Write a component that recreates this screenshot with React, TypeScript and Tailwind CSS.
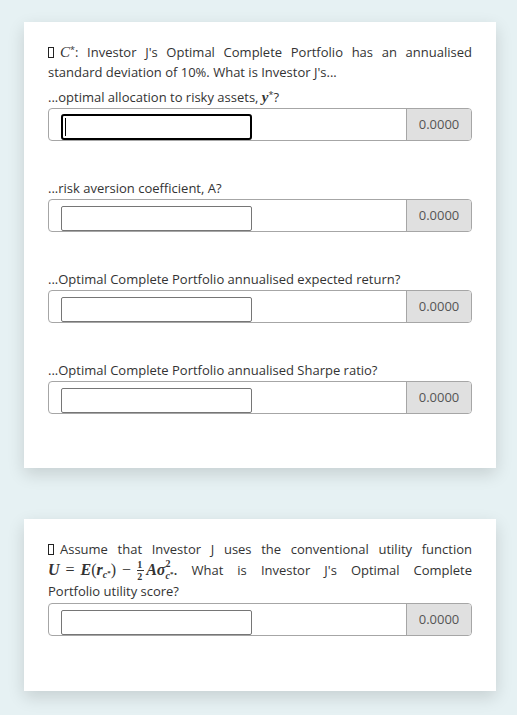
import React from "react";

const font = { fontFamily: '"Open Sans", "Noto Sans", sans-serif' };

function Tofu() {
  return <span className="inline-block w-[6px] h-[11px] border border-[#222] align-[-1px] mr-[6px]" />;
}

function InputGroup({ focused = false }: { focused?: boolean }) {
  return (
    <div className="flex h-[33px] w-[424px] border border-[#a6a6a6] rounded-[4px] overflow-hidden bg-white">
      <div className="flex-1 flex items-end pl-[12px]">
        {focused ? (
          <div className="w-[191px] h-[26px] border-2 border-black rounded-[3px] flex items-center pl-[2px]">
            <div className="w-[1px] h-[18px] bg-black" />
          </div>
        ) : (
          <div className="w-[191px] h-[25px] border border-[#767676] rounded-[2px]" />
        )}
      </div>
      <div className="w-[65px] border-l border-[#a6a6a6] bg-[#e0e0e0] flex items-center justify-center text-[#555] text-[13px]">
        0.0000
      </div>
    </div>
  );
}

function Section({ label, first = false }: { label: React.ReactNode; first?: boolean }) {
  return (
    <div className={first ? "mt-[5px]" : "mt-[37px]"}>
      <div className="leading-[20px] h-[21px]">{label}</div>
      <InputGroup focused={first} />
    </div>
  );
}

const justifyLine = "text-justify [text-align-last:justify]";
const mathI = { fontFamily: '"Liberation Serif", "DejaVu Serif", serif' };

export default function App() {
  return (
    <div className="min-h-[715px] bg-[#e6f1f3] pt-[22px] pb-[23px] text-[#333] text-[13px]" style={font}>
      <div className="ml-[24px] w-[472px] bg-white pt-[20px] px-[24px] pb-[54px] shadow-[0_6px_16px_rgba(0,0,0,0.14)]">
        <div className={"leading-[20px] " + justifyLine}>
          <Tofu />
          <span className="italic text-[15px]" style={mathI}>C</span>
          <sup className="text-[9px]">*</sup>: Investor J's Optimal Complete Portfolio has an annualised
        </div>
        <div className="leading-[20px]">standard deviation of 10%. What is Investor J's...</div>
        <Section
          first
          label={
            <>
              ...optimal allocation to risky assets,{" "}
              <span className="italic font-bold text-[15px]" style={mathI}>y</span>
              <sup className="text-[9px]">*</sup>?
            </>
          }
        />
        <Section label="...risk aversion coefficient, A?" />
        <Section label="...Optimal Complete Portfolio annualised expected return?" />
        <Section label="...Optimal Complete Portfolio annualised Sharpe ratio?" />
      </div>

      <div className="ml-[24px] mt-[51px] w-[472px] bg-white pt-[20px] px-[24px] pb-[55px] shadow-[0_6px_16px_rgba(0,0,0,0.14)]">
        <div className={"leading-[20px] " + justifyLine}>
          <Tofu />
          Assume that Investor J uses the conventional utility function
        </div>
        <div className={"leading-[22px] h-[22px] " + justifyLine}>
          <span className="italic font-bold text-[16px]" style={mathI}>U</span>
          <span className="text-[16px] mx-[6px]" style={mathI}>=</span>
          <span className="italic font-bold text-[16px]" style={mathI}>E</span>
          <span className="text-[16px]" style={mathI}>(</span>
          <span className="italic font-bold text-[16px]" style={mathI}>r</span>
          <span className="inline-block align-[-3px] italic font-bold text-[10px] leading-[10px]" style={mathI}>
            c<span className="inline-block align-[3px] text-[7px] not-italic">*</span>
          </span>
          <span className="text-[16px]" style={mathI}>)</span>
          <span className="text-[16px] mx-[6px]" style={mathI}>−</span>
          <span className="inline-block align-[-5px] text-center text-[10px] leading-[9px] font-bold" style={mathI}>
            <span className="block">1</span>
            <span className="block w-[7px] h-[1px] bg-[#333] my-[1px]" />
            <span className="block">2</span>
          </span>
          <span className="italic font-bold text-[16px] ml-[2px]" style={mathI}>Aσ</span>
          <span className="inline-block align-[-4px] text-[10px] leading-[10px]" style={mathI}>
            <span className="block font-bold">2</span>
            <span className="block italic font-bold">
              c<span className="inline-block align-[3px] text-[7px] not-italic">*</span>
            </span>
          </span>
          <span className="text-[16px]" style={mathI}>.</span> What is Investor J's Optimal Complete
        </div>
        <div className="leading-[20px] h-[20px]">Portfolio utility score?</div>
        <div className="mt-[2px]">
          <InputGroup />
        </div>
      </div>
    </div>
  );
}
